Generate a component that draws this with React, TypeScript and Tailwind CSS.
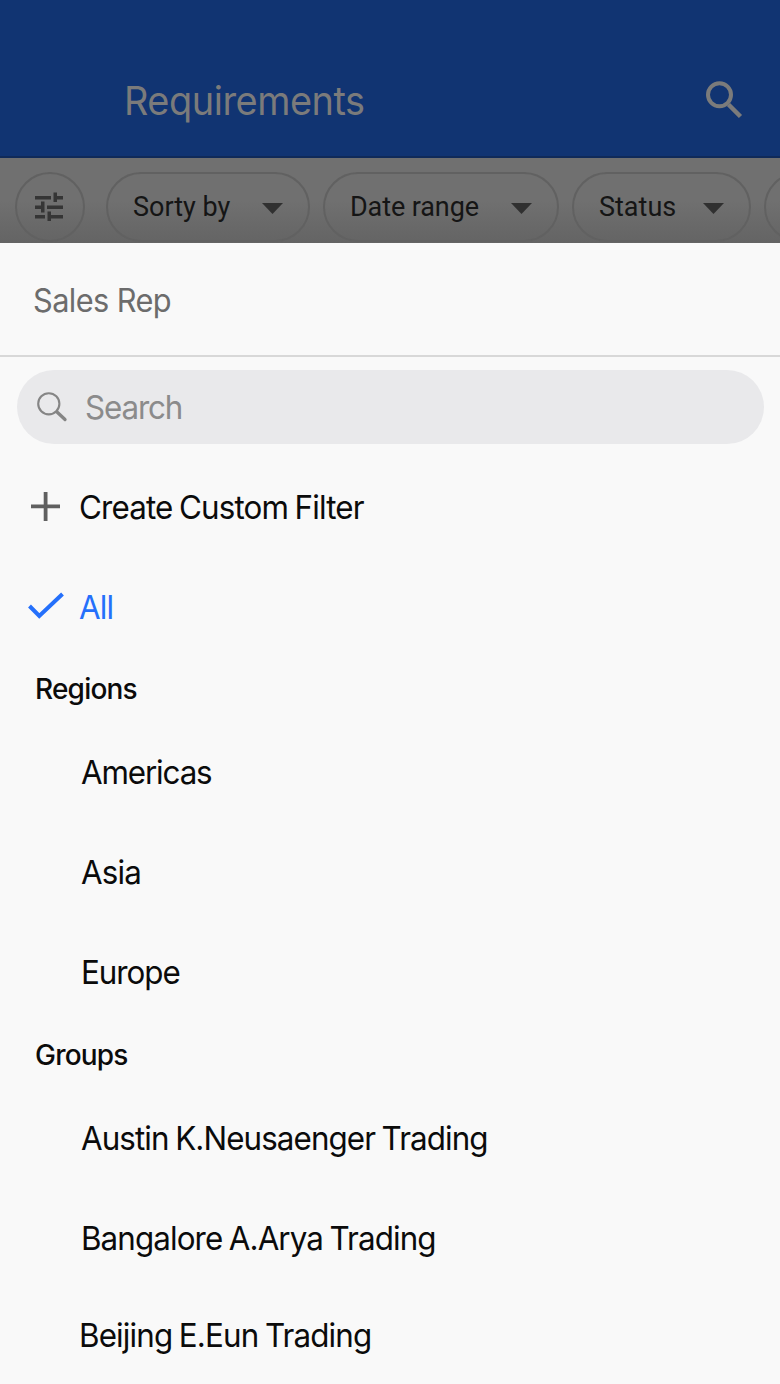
import React from "react";

type Chip = { label: string; box: string; text: string };

const chips: Chip[] = [
  { label: "Sorty by", box: "w-[204px]", text: "tracking-[0px]" },
  { label: "Date range", box: "w-[236px]", text: "tracking-[-0.1px]" },
  { label: "Status", box: "w-[179px]", text: "tracking-[0px]" },
];

function TuneIcon() {
  return (
    <svg className="mr-[2px] h-[30px] w-[30px]" viewBox="0 0 30 30" fill="#353535">
      <path d="M1 4h16v3.500H1zM19.500 0.500h3.500v9.500h-3.500zM23 4h6v3.500h-6zM1 13.500h7v3.500H1zM7 9.500h3.500v11H7zM13 13.500h16v3.500H13zM1 23h10v3.500H1zM13.500 19.500h3.500V29h-3.500zM17 23h12v3.500H17z" />
    </svg>
  );
}

function Arrow() {
  return (
    <svg className="mt-[3px] h-[11px] w-[21px]" viewBox="0 0 21 11" fill="#303030">
      <path d="M0 0h21L10.500 11z" />
    </svg>
  );
}

function Row({
  children,
  icon,
  className,
  tracking = "tracking-[-0.9px]",
}: {
  children: string;
  icon?: React.ReactNode;
  className: string;
  tracking?: string;
}) {
  return (
    <li className={`flex items-center text-[33px] leading-[40px] whitespace-nowrap ${className}`}>
      {icon}
      <span className={`inline-block origin-left scale-x-[0.95] [word-spacing:-1.5px] ${tracking}`}>{children}</span>
    </li>
  );
}

function Heading({ children, className }: { children: string; className: string }) {
  return (
    <li className={`flex items-center pl-[35px] text-[28px] leading-[34px] font-medium tracking-[-0.8px] ${className}`}>
      <span>{children}</span>
    </li>
  );
}

export default function App() {
  return (
    <div className="flex h-[1384px] w-[780px] flex-col overflow-hidden bg-[#f9f9f9] font-['Inter',sans-serif] text-[#0b0b0b]">
      <header className="flex h-[158px] shrink-0 justify-between border-b-2 border-[#102a59] bg-[#113472] pt-[76px] pr-[37px] pl-[124px]">
        <h1 className="mt-[1px] origin-left scale-x-[0.96] text-[39.500px] leading-[48px] font-normal tracking-[-0.5px] text-[#7b7b7b]">
          Requirements
        </h1>
        <svg className="mt-[4px] h-[40px] w-[38px]" viewBox="0 0 38 40" fill="none" stroke="#7b7b7b">
          <circle cx="14.500" cy="14.800" r="11.500" strokeWidth="4" />
          <path d="M23.500 24.500L35.500 36.500" strokeWidth="4.500" />
        </svg>
      </header>

      <nav className="flex h-[85px] shrink-0 gap-[13px] overflow-hidden bg-linear-to-b from-[#707070] from-50% to-[#646464] pt-[14px] pl-[15px] font-['Roboto',sans-serif]">
        <button className="mr-[8px] flex size-[70px] shrink-0 items-center justify-center rounded-full border-2 border-[#616161]">
          <TuneIcon />
        </button>
        {chips.map((c) => (
          <button
            key={c.label}
            className={`flex h-[70px] shrink-0 items-center justify-between rounded-full border-2 border-[#616161] px-[25px] text-[27px] whitespace-nowrap text-[#151515] ${c.box}`}
          >
            <span className={c.text}>{c.label}</span>
            <Arrow />
          </button>
        ))}
        <button className="h-[70px] w-[200px] shrink-0 rounded-full border-2 border-[#616161]" />
      </nav>

      <main className="flex flex-1 flex-col">
        <h2 className="flex h-[114px] shrink-0 items-center border-b-2 border-[#d8d8d8] pt-[3px] pl-[33px] text-[32px] text-[#6c6c6c]">
          <span className="inline-block origin-left scale-x-[0.96] tracking-[-0.6px]">Sales Rep</span>
        </h2>
        <label className="mx-[17px] mt-[12.500px] flex h-[74.500px] w-[747px] shrink-0 items-center rounded-full bg-[#e9e9eb] pl-[20px] text-[33px] text-[#8b8b8b]">
          <svg className="mr-[17px] h-[30px] w-[31px]" viewBox="0 0 31 30" fill="none" stroke="#858585" strokeLinecap="round">
            <circle cx="11.800" cy="11.800" r="10.600" strokeWidth="2.100" />
            <path d="M20 20L28 27.500" strokeWidth="3.300" />
          </svg>
          <span className="mt-[2px] inline-block origin-left scale-x-[0.95] tracking-[-1.2px]">Search</span>
        </label>

        <ul className="mt-[13px]">
          <Row
            className="h-[100px] pl-[31px]"
            icon={
              <svg className="mr-[19px] mb-[1px] h-[29px] w-[29px]" viewBox="0 0 29 29" fill="#606060">
                <path d="M0 12.500h12.700V0h3.800v12.500H29v3.800H16.500V29h-3.800V16.300H0z" />
              </svg>
            }
          >
            Create Custom Filter
          </Row>
          <Row
            className="h-[99px] pl-[28px] text-[#2570fb]"
            icon={
              <svg className="mr-[15px] mb-[1px] h-[28px] w-[36px]" viewBox="0 0 36 28" fill="none" stroke="#2570fb" strokeWidth="4">
                <path d="M1.500 14L11.300 24L34.500 2" />
              </svg>
            }
          >
            All
          </Row>
          <Heading className="h-[66px]">Regions</Heading>
          <Row className="h-[100px] pl-[81px]" tracking="tracking-[-1.2px]">Americas</Row>
          <Row className="h-[100px] pl-[81px]">Asia</Row>
          <Row className="h-[100px] pl-[81px]" tracking="tracking-[-1.1px]">Europe</Row>
          <Heading className="h-[66px]">Groups</Heading>
          <Row className="h-[100px] pl-[81px]" tracking="tracking-[-0.95px]">Austin K.Neusaenger Trading</Row>
          <Row className="h-[99px] pl-[81px]" tracking="tracking-[-0.95px]">Bangalore A.Arya Trading</Row>
          <Row className="h-[96px] pl-[79px]">Beijing E.Eun Trading</Row>
        </ul>
      </main>
    </div>
  );
}
